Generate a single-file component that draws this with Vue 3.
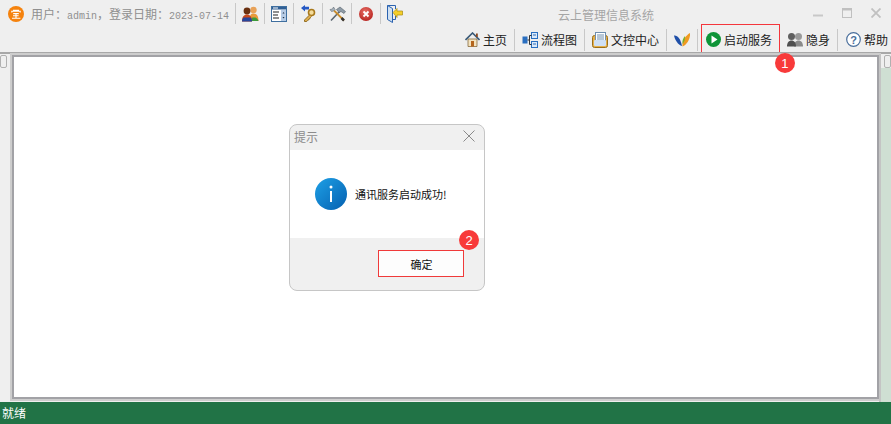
<template>
  <div class="app-window">
    <header class="app-header">
      <div class="top-row">
        <svg class="logo" width="16" height="16" viewBox="0 0 16 16">
          <circle cx="8" cy="8" r="8" fill="#f5820d" />
          <path d="M5 4.200h6M3.800 6.400V5.200h8.400v1.200M5.200 7.600h5.600M8 7.600v4.400M5 9.800h5.600M4 12.200h8.400" fill="none" stroke="#fff" stroke-width="1.100" />
        </svg>
        <span class="user-info">用户：<span class="latin">admin</span>，登录日期：<span class="latin">2023-07-14</span></span>
        <div class="quick-tools">
          <span class="quick-tool">
            <svg width="18" height="16" viewBox="0 0 18 16">
              <circle cx="12.500" cy="4" r="3.200" fill="#e8a258" />
              <path d="M8.500 15c0-6 1.500-7.500 4-7.500s5 1.500 5 7.500z" fill="#e89a3a" />
              <path d="M10 15c0-2 .5-3 1.500-3.500h3c1 .5 2.500 1.500 3 3.500z" fill="#3b9a3b" />
              <circle cx="6" cy="5" r="3.400" fill="#6a3010" />
              <path d="M1 15.500c0-5 2-7 5-7s5 2 5 7z" fill="#c8481a" />
              <path d="M1 15.500c0-2 .5-3 1.500-4h7c1 1 1.500 2 1.500 4z" fill="#27459c" />
            </svg>
          </span>
          <span class="quick-tool">
            <svg width="16" height="16" viewBox="0 0 16 16">
              <rect x=".5" y=".5" width="15" height="15" fill="#fff" stroke="#3f6f9f" />
              <rect x="1" y="1" width="14" height="2.500" fill="#2f5f95" />
              <rect x="2" y="1.500" width="5" height="1" fill="#fff" />
              <path d="M2 6h6M2 9h5M2 12h6" stroke="#222" stroke-width="1.200" />
              <rect x="10" y="4" width="5" height="11" fill="#b7cce6" />
              <path d="M11.500 7.500l1-1.500 1 1.500zM11.500 11l1 1.500 1-1.500z" fill="#234" />
            </svg>
          </span>
          <span class="quick-tool">
            <svg width="15" height="17" viewBox="0 0 15 17">
              <path d="M0 3 4 0v1.800h4v2.600H4v2z" fill="#2458c4" />
              <circle cx="10.500" cy="7.500" r="3" fill="#f4dc9c" stroke="#a8781a" stroke-width="1.600" />
              <path d="M8.500 10 3.500 15v1.500h2.200l.8-1.200 1-.2.300-1 1-.2.200-1 1.500-1.500" fill="#e0b050" stroke="#8a6416" stroke-width=".9" />
            </svg>
          </span>
          <span class="quick-tool">
            <svg width="17" height="16" viewBox="0 0 17 16">
              <path d="M2 14.500 11 5" stroke="#5a6670" stroke-width="1.600" />
              <path d="M7.500 3.500 11 1l5.500 4.500-1.500 2-3-2-2 1z" fill="#8e9ba6" stroke="#55606a" stroke-width=".6" />
              <path d="M15 14.500 5 4.500" stroke="#c98d2e" stroke-width="1.800" />
              <path d="M1 3.500 2.500 5.500 4.500 5 6 3.500 4.500 1 3.500 3z" fill="#a8b4be" stroke="#5f6a74" stroke-width=".6" />
              <path d="M12.500 12l2.500 2.500" stroke="#333" stroke-width="2.500" />
            </svg>
          </span>
          <span class="quick-tool">
            <svg width="16" height="16" viewBox="0 0 16 16">
              <defs>
                <radialGradient id="stopRed" cx="45%" cy="35%" r="70%">
                  <stop offset="0" stop-color="#e87068" />
                  <stop offset="1" stop-color="#b5201c" />
                </radialGradient>
              </defs>
              <circle cx="8" cy="8" r="7" fill="url(#stopRed)" />
              <path d="M5.500 5.500l5 5M10.500 5.500l-5 5" stroke="#fff" stroke-width="1.800" />
            </svg>
          </span>
          <span class="quick-tool">
            <svg width="16" height="18" viewBox="0 0 16 18">
              <path d="M.5.5h8v3.500M8.500 11v3.500h-3" fill="none" stroke="#2a62b0" />
              <path d="M.5.500v14l5 3V3.500z" fill="#cfe0f2" stroke="#2a62b0" />
              <path d="M6 7.500 10 3.500v2.500h5.500v4H10v2.500z" fill="#f5cf2a" stroke="#a88a12" stroke-width=".7" />
            </svg>
          </span>
        </div>
        <span class="app-title">云上管理信息系统</span>
        <div class="window-controls">
          <svg width="10" height="10" viewBox="0 0 10 10"><path d="M0 7.500h10" stroke="#c8c8c8" stroke-width="2" /></svg>
          <svg width="10" height="10" viewBox="0 0 10 10"><rect x=".5" y=".5" width="9" height="9" fill="none" stroke="#c0c0c0" /><path d="M0 1.500h10" stroke="#c0c0c0" stroke-width="2" /></svg>
          <svg width="10" height="10" viewBox="0 0 10 10"><path d="M.5.5l9 9M9.500.5l-9 9" stroke="#c0c0c0" stroke-width="1.800" /></svg>
        </div>
      </div>
      <nav class="nav-row">
        <button class="nav-item">
          <svg width="15" height="15" viewBox="0 0 15 15">
            <path d="M3 7v7.500h9V7z" fill="#f3e3c0" stroke="#7a5a2a" stroke-width=".7" />
            <rect x="6" y="9" width="3" height="5.500" fill="#b5651d" />
            <path d="M.5 8 7.500 1l7 7" fill="none" stroke="#3a5a78" stroke-width="1.600" />
            <rect x="11" y="1.500" width="1.800" height="3.500" fill="#8a4a22" />
          </svg>
          主页
        </button>
        <i class="nav-sep"></i>
        <button class="nav-item">
          <svg width="16" height="16" viewBox="0 0 16 16">
            <rect x="9.500" y=".5" width="6" height="6" fill="#dce9f8" stroke="#2a6fc0" />
            <rect x="9.500" y="9.500" width="6" height="6" fill="#dce9f8" stroke="#2a6fc0" />
            <rect x=".5" y="4.500" width="5" height="7" fill="#2a6fc0" />
            <path d="M5.500 8h2M7.500 3.500v9M7.500 3.500h2M7.500 12.500h2" stroke="#333" fill="none" />
            <path d="M11 3h3M11 12h3" stroke="#2a6fc0" />
          </svg>
          流程图
        </button>
        <i class="nav-sep"></i>
        <button class="nav-item">
          <svg width="16" height="16" viewBox="0 0 16 16">
            <rect x=".5" y="3.500" width="15" height="12" rx="2" fill="#e6b04a" stroke="#9a6f1c" />
            <rect x="3.500" y=".5" width="10" height="10" fill="#fff" stroke="#6f8fb0" />
            <rect x="2" y="8" width="12" height="6" rx="1" fill="#cfe0f5" />
            <path d="M5 3h7M5 5h7M5 7h7" stroke="#6f8fb0" />
          </svg>
          文控中心
        </button>
        <i class="nav-sep"></i>
        <button class="nav-item">
          <svg width="16" height="14" viewBox="0 0 16 14">
            <path d="M0 2.500c3.500-.5 6.500 3 8 10.500C4 12 1 7 0 2.500z" fill="#1f4fa8" />
            <path d="M16 0c.5 5-2.500 11.500-7.500 13.500C8 8 11 3 16 0z" fill="#f09a20" />
            <path d="M8.500 11c-.5-3 .5-6 2.500-8 .3 3-.5 6-2.500 8z" fill="#7ab02c" />
          </svg>
        </button>
        <i class="nav-sep"></i>
        <button class="nav-item service">
          <svg width="15" height="15" viewBox="0 0 15 15">
            <circle cx="7.500" cy="7.500" r="7.500" fill="#0e9438" />
            <path d="M5.500 3.500v8l6-4z" fill="#fff" />
          </svg>
          启动服务
          <span class="badge badge-one">1</span>
        </button>
        <button class="nav-item hide-item">
          <svg width="16" height="15" viewBox="0 0 16 15">
            <circle cx="11.500" cy="4.500" r="3.500" fill="#9a9a9a" />
            <path d="M7 14.500c0-4 2-6 4.500-6s4.500 2 4.500 6z" fill="#8a8a8a" />
            <circle cx="4.500" cy="4.500" r="3.500" fill="#5f5f5f" />
            <path d="M0 14.500c0-4 2-6 4.500-6s4.500 2 4.500 6z" fill="#4f4f4f" />
          </svg>
          隐身
        </button>
        <i class="nav-sep"></i>
        <button class="nav-item">
          <svg width="15" height="15" viewBox="0 0 15 15">
            <circle cx="7.500" cy="7.500" r="6.800" fill="#fff" stroke="#4a6f9c" stroke-width="1.200" />
            <text x="7.500" y="11.500" class="help-mark">?</text>
          </svg>
          帮助
        </button>
      </nav>
    </header>

    <main class="workspace">
      <div class="side-strip"><span class="grip"></span></div>
      <div class="content-frame"></div>
      <div class="side-strip right"><span class="grip"></span></div>

      <div class="dialog">
        <div class="dialog-title">
          <span>提示</span>
          <svg width="12" height="12" viewBox="0 0 12 12"><path d="M.5.5l11 11M11.500.5l-11 11" stroke="#8a8a8a" /></svg>
        </div>
        <div class="dialog-body">
          <svg width="32" height="32" viewBox="0 0 32 32">
            <defs>
              <linearGradient id="infoBlue" x1="0" y1="0" x2="1" y2="1">
                <stop offset="0" stop-color="#1ea0e6" />
                <stop offset="1" stop-color="#0560b0" />
              </linearGradient>
            </defs>
            <circle cx="16" cy="16" r="16" fill="url(#infoBlue)" />
            <circle cx="16" cy="9" r="1.500" fill="#fff" />
            <rect x="15" y="13" width="2" height="11" fill="#fff" />
          </svg>
          <p>通讯服务启动成功!</p>
        </div>
        <div class="dialog-footer">
          <button class="ok-btn">确定</button>
          <span class="badge badge-two">2</span>
        </div>
      </div>
    </main>

    <footer class="status-bar">就绪</footer>
  </div>
</template>

<script setup>
</script>

<style>
html,
body {
  margin: 0;
  background: #efefef;
}
</style>

<style scoped>
.app-window {
  display: flex;
  flex-direction: column;
  width: 891px;
  height: 424px;
  overflow: hidden;
  background: #efefef;
  font-family: "Noto Sans CJK SC", "Liberation Sans", sans-serif;
  font-size: 12px;
  color: #222;
}

.app-header {
  flex: none;
  height: 52px;
}

.top-row {
  display: flex;
  align-items: center;
  height: 27px;
  padding-left: 8px;
}

.logo {
  flex: none;
}

.user-info {
  margin-left: 7px;
  width: 197px;
  white-space: nowrap;
  color: #8f8f8f;
}

.latin {
  font-family: "Liberation Mono", monospace;
  font-size: 10px;
}

.quick-tools {
  display: flex;
  margin-left: 7px;
}

.quick-tool {
  display: flex;
  align-items: center;
  justify-content: center;
  width: 28px;
  height: 21px;
  border-left: 1px solid #c8c8c8;
}

.app-title {
  margin-left: 149px;
  margin-top: 1px;
  color: #a5a5a5;
}

.window-controls {
  display: flex;
  gap: 19px;
  margin-left: auto;
  margin-right: 10px;
  margin-top: -1px;
}

.nav-row {
  display: flex;
  justify-content: flex-end;
  align-items: center;
  height: 25px;
  padding-right: 3px;
}

.nav-item {
  position: relative;
  display: flex;
  align-items: center;
  gap: 3px;
  height: 24px;
  padding: 0;
  border: 0;
  background: none;
  font: inherit;
  color: #222;
  white-space: nowrap;
}

.nav-sep {
  width: 1px;
  height: 22px;
  margin: 0 7px;
  background: #c8c8c8;
}

.nav-sep + .service {
  margin-left: -3px;
}

.service {
  align-self: flex-start;
  height: 28px;
  margin-top: -2px;
  padding: 0 7px 0 4px;
  outline: 1px solid #f4363c;
}

.hide-item {
  margin-left: 8px;
}

.nav-sep + .nav-item:last-child {
  margin-left: 1px;
}

.badge {
  position: absolute;
  z-index: 2;
  display: flex;
  align-items: center;
  justify-content: center;
  width: 20px;
  height: 20px;
  border-radius: 50%;
  background: #f83a3a;
  color: #fff;
  font-family: "Liberation Sans", sans-serif;
  font-size: 13px;
}

.badge-one {
  left: 73px;
  top: 28px;
}

.badge-two {
  right: 5px;
  top: -8px;
}

.help-mark {
  font-family: "Liberation Sans", sans-serif;
  font-size: 11px;
  font-weight: 700;
  text-anchor: middle;
  fill: #4a6f9c;
}

.workspace {
  position: relative;
  flex: 1;
  display: flex;
  min-height: 0;
  border-top: 2px solid #a8a8a8;
}

.side-strip {
  flex: none;
  width: 12px;
  padding-top: 1px;
  box-sizing: border-box;
}

.side-strip.right {
  background: linear-gradient(to right, #c4c4c4 2px, transparent 2px),
    linear-gradient(to bottom, transparent 14px, #cfdfd3 14px);
}

.grip {
  display: block;
  width: 7px;
  height: 13px;
  border: 1px solid #b0b0b0;
  border-radius: 2px;
  background: #efefef;
  box-sizing: border-box;
}

.right .grip {
  margin-left: 5px;
}

.content-frame {
  flex: 1;
  margin-top: 1px;
  margin-bottom: 3px;
  border: 2px solid #a2a2a6;
  background: #fff;
  box-shadow: 0 0 0 2px #cdcdcd;
}

.dialog {
  position: absolute;
  left: 289px;
  top: 70px;
  display: flex;
  flex-direction: column;
  width: 196px;
  height: 167px;
  box-sizing: border-box;
  border: 1px solid #c6c6c6;
  border-radius: 8px;
  background: #f0f0f0;
}

.dialog-title {
  flex: none;
  display: flex;
  align-items: center;
  justify-content: space-between;
  height: 25px;
  padding: 0 9px 3px 4px;
  box-sizing: border-box;
  color: #8c8c8c;
}

.dialog-body {
  flex: none;
  display: flex;
  align-items: center;
  gap: 8px;
  height: 88px;
  padding-left: 25px;
  box-sizing: border-box;
  background: #fff;
}

.dialog-body p {
  margin: 0;
  font-size: 11px;
  color: #111;
}

.dialog-footer {
  position: relative;
  flex: 1;
  display: flex;
  justify-content: flex-end;
  align-items: flex-start;
  padding: 12px 20px 0 0;
}

.ok-btn {
  width: 86px;
  height: 27px;
  padding: 0 0 0 1px;
  border: 1px solid #f03a3a;
  background: #fdfdfd;
  font: inherit;
  font-size: 11px;
  color: #111;
}

.status-bar {
  flex: none;
  height: 22px;
  padding-left: 2px;
  background: #217346;
  color: #fff;
  line-height: 22px;
}
</style>
